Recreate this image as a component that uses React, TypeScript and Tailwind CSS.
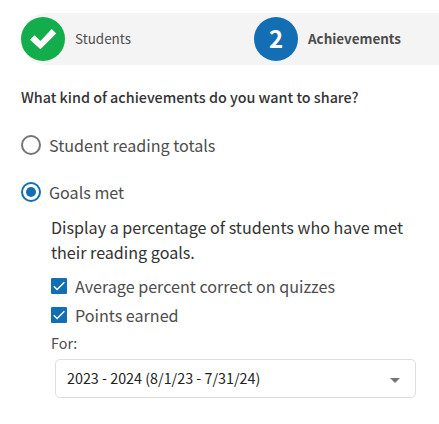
import { useState } from "react"

function Radio({ label, checked, onSelect }: { label: string; checked: boolean; onSelect: () => void }) {
  return (
    <button
      role="radio"
      aria-checked={checked}
      onClick={onSelect}
      className="flex h-6 items-center gap-2 text-[16.12px] leading-6 text-[#4d4d4d]"
    >
      <svg className="h-5 w-5 shrink-0" viewBox="0 0 20 20" fill="none">
        <circle cx="10" cy="10" r="9" stroke={checked ? "#146eb4" : "#757575"} strokeWidth="2" />
        {checked && <circle cx="10" cy="10" r="5" fill="#146eb4" />}
      </svg>
      <span className="whitespace-nowrap">{label}</span>
    </button>
  )
}

function Checkbox({ label }: { label: string }) {
  const [checked, setChecked] = useState(true)

  return (
    <button
      role="checkbox"
      aria-checked={checked}
      onClick={() => setChecked(!checked)}
      className="flex h-[29px] items-center gap-2 text-[16.12px] leading-6 text-[#4d4d4d]"
    >
      <svg className="h-4 w-4 shrink-0" viewBox="0 0 16 16" fill="none">
        <rect width="16" height="16" rx="1" fill={checked ? "#146eb4" : "#757575"} />
        {checked && <path d="M2.8 8.2l3.3 3.3L13.4 4.3" stroke="white" strokeWidth="1.4" />}
      </svg>
      <span className="whitespace-nowrap">{label}</span>
    </button>
  )
}

export default function App() {
  const [kind, setKind] = useState("goals")

  return (
    <div className="h-[424px] w-[439px] overflow-hidden bg-white pl-[21px] pt-[13px] font-['Noto_Sans_CJK_SC','Noto_Sans',sans-serif]">
      {/* Steps */}
      <div className="flex h-[52px] items-center rounded-l-[26px] bg-[#f4f4f4] text-[13.43px] leading-5 text-[#4d4d4d]">
        <div className="flex w-[233px] items-center gap-[10px]">
          <div className="flex h-11 w-11 items-center justify-center rounded-full bg-[#13ae4b]">
            <svg className="h-11 w-11" viewBox="0 0 44 44" fill="white">
              <path d="M9 22.8l4.6-4.5 5.8 5.6L30.7 12l4.5 4.4L19.4 32.2z" />
            </svg>
          </div>
          <span className="pb-[2px]">Students</span>
        </div>
        <div className="flex items-center gap-[10px]">
          <div className="flex h-11 w-11 items-center justify-center rounded-full bg-[#146eb4] pb-[3px] text-2xl font-bold text-white">
            2
          </div>
          <span className="pb-[2px] font-bold">Achievements</span>
        </div>
      </div>

      <h1 className="mt-[21px] whitespace-nowrap text-[14.33px] font-medium leading-[22px] text-[#333333]">
        What kind of achievements do you want to share?
      </h1>

      <div role="radiogroup" className="mt-[25px] flex flex-col gap-[23px]">
        <Radio label="Student reading totals" checked={kind === "totals"} onSelect={() => setKind("totals")} />
        <Radio label="Goals met" checked={kind === "goals"} onSelect={() => setKind("goals")} />
      </div>

      {/* Goals met options */}
      <div className="ml-[30px] mt-[11px] text-[#333333]">
        <p className="whitespace-nowrap text-[16.12px] leading-[25px]">
          Display a percentage of students who have met
          <br />
          their reading goals.
        </p>
        <div className="mt-[6px] flex flex-col">
          <Checkbox label="Average percent correct on quizzes" />
          <Checkbox label="Points earned" />
        </div>
        <p className="mt-1 text-[14.33px] leading-5 text-[#4d4d4d]">For:</p>
        <button className="ml-1 mt-[6px] flex h-[39px] w-[361px] items-center justify-between rounded-[5px] border border-[#dedede] pl-[11px] pr-[15px] text-[14.33px] text-[#222222]">
          <span className="whitespace-nowrap pb-[2px]">2023 - 2024 (8/1/23 - 7/31/24)</span>
          <svg className="mt-[3px] h-[5px] w-[10px]" viewBox="0 0 10 5" fill="#757575">
            <path d="M0 0h10L5 5z" />
          </svg>
        </button>
      </div>
    </div>
  )
}
